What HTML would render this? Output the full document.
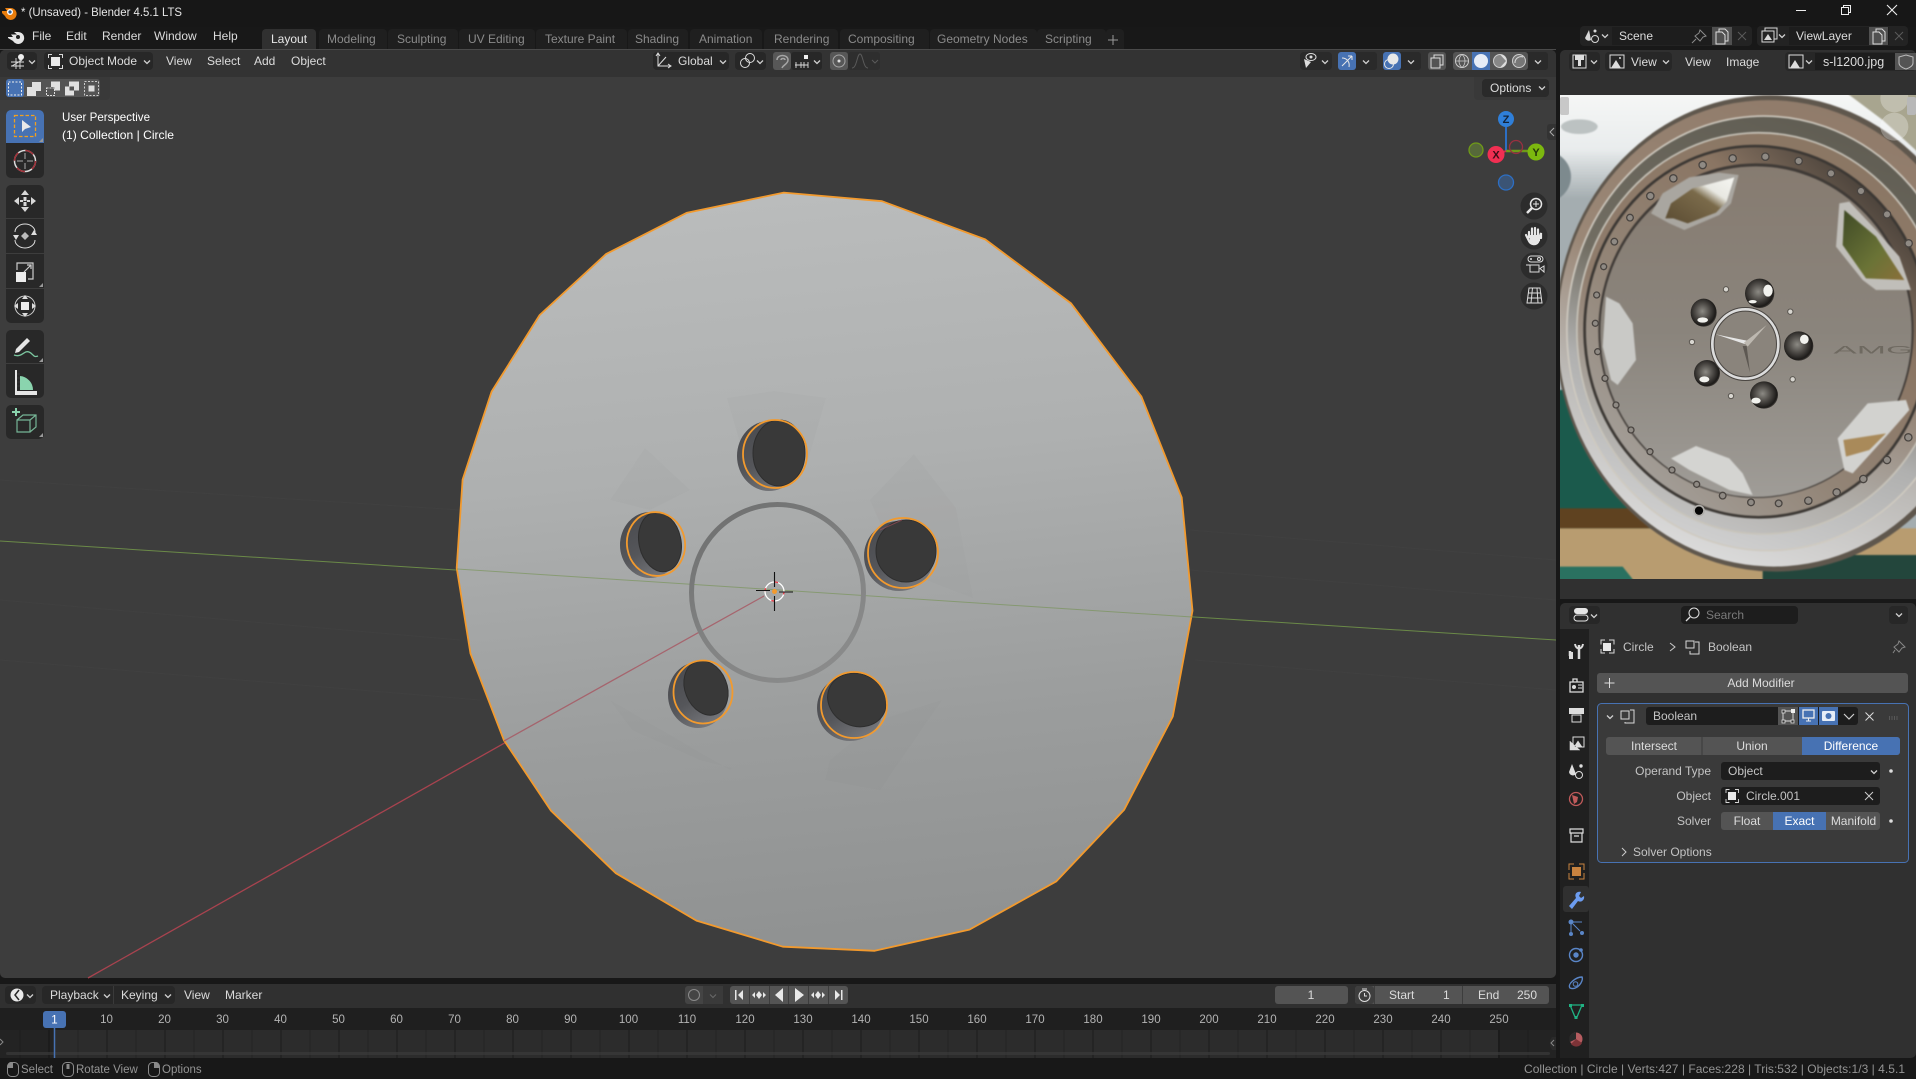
<!DOCTYPE html>
<html lang="en"><head><meta charset="utf-8"><title>Blender</title>
<style>
html,body{margin:0;padding:0;background:#181818;width:1916px;height:1079px;overflow:hidden}
svg{display:block;position:absolute;left:0;top:0}
text{font-family:"Liberation Sans",sans-serif;font-size:12px;fill:#cfcfcf}
.m{fill:#dcdcdc}.tab{fill:#8b8b8b}.d{fill:#c4c4c4}.w{fill:#fff}
.f{font-size:11.5px;fill:#b4b4b4;text-anchor:middle}
.s{font-size:11.5px;fill:#949494}
.r{text-anchor:end}.c{text-anchor:middle}
</style></head><body>
<svg width="1916" height="1079" viewBox="0 0 1916 1079" xmlns="http://www.w3.org/2000/svg">
<defs>
<linearGradient id="disc" x1="0.45" y1="0" x2="0.55" y2="1"><stop offset="0" stop-color="#babcbc"/><stop offset=".35" stop-color="#aeb0b0"/><stop offset=".7" stop-color="#9b9d9d"/><stop offset="1" stop-color="#8f9191"/></linearGradient>
<linearGradient id="lip" x1="0" y1="0" x2="0.6" y2="1"><stop offset="0" stop-color="#47484c"/><stop offset=".6" stop-color="#55565a"/><stop offset="1" stop-color="#75767a"/></linearGradient>
<linearGradient id="ring" x1="0.2" y1="0" x2="0.8" y2="1"><stop offset="0" stop-color="#6f7070"/><stop offset=".55" stop-color="#828383"/><stop offset="1" stop-color="#8b8c8c"/></linearGradient>
<pattern id="tl" width="58" height="28" patternUnits="userSpaceOnUse" patternTransform="translate(106.5 1030)"><rect x="0" y="0" width="1" height="28" fill="#1b1b1b"/><rect x="29" y="0" width="1" height="28" fill="#232323"/></pattern>
<linearGradient id="rim1" x1=".7" y1="0" x2=".3" y2="1"><stop offset="0" stop-color="#8f7a69"/><stop offset=".45" stop-color="#9a8776"/><stop offset=".72" stop-color="#bdbbb8"/><stop offset="1" stop-color="#dedede"/></linearGradient>
<linearGradient id="rim2" x1=".7" y1="0" x2=".3" y2="1"><stop offset="0" stop-color="#5f5c52"/><stop offset=".45" stop-color="#716d62"/><stop offset=".68" stop-color="#b0b0af"/><stop offset="1" stop-color="#d2d2d2"/></linearGradient>
<linearGradient id="rim3" x1=".7" y1="0" x2=".3" y2="1"><stop offset="0" stop-color="#8a7663"/><stop offset=".5" stop-color="#8f7c6c"/><stop offset=".8" stop-color="#aeaba6"/><stop offset="1" stop-color="#c4c4c4"/></linearGradient>
<linearGradient id="rim4" x1=".95" y1=".1" x2=".1" y2=".9"><stop offset="0" stop-color="#34302c"/><stop offset=".3" stop-color="#8a7563"/><stop offset=".65" stop-color="#928476"/><stop offset="1" stop-color="#a5a19c"/></linearGradient>
<linearGradient id="face" x1=".5" y1="0" x2=".5" y2="1"><stop offset="0" stop-color="#867b70"/><stop offset=".5" stop-color="#8a847c"/><stop offset="1" stop-color="#9f9c97"/></linearGradient>
<linearGradient id="sky" x1="0" y1="0" x2="0" y2="1"><stop offset="0" stop-color="#f6f7f6"/><stop offset=".12" stop-color="#e9eced"/><stop offset=".22" stop-color="#a4adb0"/></linearGradient>
<linearGradient id="trees" x1="0" y1="0" x2="1" y2="1"><stop offset="0" stop-color="#3f4a26"/><stop offset=".6" stop-color="#6a7336"/><stop offset="1" stop-color="#8a6f3a"/></linearGradient>
<linearGradient id="w1" x1="0" y1="1" x2="1" y2="0"><stop offset="0" stop-color="#5a4b32"/><stop offset=".55" stop-color="#7a6a4a"/><stop offset=".7" stop-color="#e8e8e2"/><stop offset="1" stop-color="#f6f6f2"/></linearGradient>
<radialGradient id="lug" cx=".45" cy=".45" r=".62"><stop offset="0" stop-color="#8c8a84"/><stop offset=".45" stop-color="#4e4b47"/><stop offset=".82" stop-color="#1c1a18"/><stop offset="1" stop-color="#67625c"/></radialGradient>
<filter id="soft" x="-5%" y="-5%" width="110%" height="110%" color-interpolation-filters="sRGB"><feGaussianBlur stdDeviation="2.4"/></filter>
<clipPath id="imgclip"><rect x="1560" y="95" width="356" height="484"/></clipPath>
<path id="chev" d="M-3-1.5 0 1.5 3-1.5" fill="none" stroke="#d0d0d0" stroke-width="1.3"/>
</defs>

<rect width="1916" height="1079" fill="#181818"/>
<rect width="1916" height="27" fill="#171717"/>
<!-- title bar -->
<g transform="translate(2 5)"><path d="M0 6 5 6 3 3 8 3A6 6 0 1 1 3 11L0 8Z" fill="#e87d0d"/><circle cx="8" cy="7" r="3" fill="#fff"/><circle cx="8" cy="7" r="1.6" fill="#2a5c96"/></g>
<text x="21" y="16" style="fill:#e6e6e6" textLength="161" lengthAdjust="spacingAndGlyphs">* (Unsaved) - Blender 4.5.1 LTS</text>
<path d="M1796 10.500H1806" stroke="#eee" stroke-width="1"/>
<path d="M1841.500 7.500h7v7h-7zM1843.500 7.500v-2h7v7h-2" fill="none" stroke="#eee"/>
<path d="M1887 5 1897 15M1897 5 1887 15" stroke="#eee" stroke-width="1.1"/>

<!-- top bar -->
<g transform="translate(7 29)"><path d="M1 8 6 8 4 5.500 10 5.500 7 3 11 3A6 6 0 1 1 6 12L1 9Z" fill="#e6e6e6"/><circle cx="11" cy="8" r="2" fill="#222"/></g>
<text x="32" y="40" class="m">File</text><text x="66" y="40" class="m">Edit</text><text x="102" y="40" class="m">Render</text><text x="154" y="40" class="m">Window</text><text x="213" y="40" class="m">Help</text>
<path d="M262 49V33a4 4 0 0 1 4-4H312a4 4 0 0 1 4 4V49Z" fill="#303030"/>
<g fill="#1f1f1f"><path d="M319 49V33a4 4 0 0 1 4-4H383a4 4 0 0 1 4 4V49Z"/><path d="M388 49V33a4 4 0 0 1 4-4H454a4 4 0 0 1 4 4V49Z"/><path d="M459 49V33a4 4 0 0 1 4-4H531a4 4 0 0 1 4 4V49Z"/><path d="M536 49V33a4 4 0 0 1 4-4H623a4 4 0 0 1 4 4V49Z"/><path d="M628 49V33a4 4 0 0 1 4-4H684a4 4 0 0 1 4 4V49Z"/><path d="M690 49V33a4 4 0 0 1 4-4H758a4 4 0 0 1 4 4V49Z"/><path d="M764 49V33a4 4 0 0 1 4-4H834a4 4 0 0 1 4 4V49Z"/><path d="M840 49V33a4 4 0 0 1 4-4H925a4 4 0 0 1 4 4V49Z"/><path d="M930 49V33a4 4 0 0 1 4-4H1033a4 4 0 0 1 4 4V49Z"/><path d="M1037 49V33a4 4 0 0 1 4-4H1102a4 4 0 0 1 4 4V49Z"/><path d="M1106 49V33a4 4 0 0 1 4-4H1120a4 4 0 0 1 4 4V49Z"/></g>
<text x="271" y="43" class="m" style="fill:#e6e6e6">Layout</text>
<text x="327" y="43" class="tab">Modeling</text><text x="397" y="43" class="tab">Sculpting</text><text x="468" y="43" class="tab">UV Editing</text><text x="545" y="43" class="tab">Texture Paint</text><text x="635" y="43" class="tab">Shading</text><text x="699" y="43" class="tab">Animation</text><text x="774" y="43" class="tab">Rendering</text><text x="848" y="43" class="tab">Compositing</text><text x="937" y="43" class="tab">Geometry Nodes</text><text x="1045" y="43" class="tab">Scripting</text>
<path d="M1113 35V45M1108 40H1118" stroke="#9a9a9a" stroke-width="1"/>

<!-- scene / viewlayer -->
<rect x="1580" y="26" width="172" height="20" rx="4" fill="#232323"/>
<rect x="1612" y="27" width="120" height="18" fill="#1d1d1d"/>
<rect x="1712" y="27" width="20" height="18" fill="#505050"/>
<path d="M1589 30 1585 38A4 4 0 0 0 1591 40Z" fill="#d8d8d8"/><circle cx="1595" cy="31" r="1.500" fill="#d8d8d8"/><circle cx="1595" cy="39" r="3.500" fill="none" stroke="#d8d8d8"/>
<use href="#chev" x="1605" y="36"/>
<text x="1619" y="40" class="m">Scene</text>
<path d="M1700 30 1706 36 1703 37 1700 41 1695 36 1699 33ZM1696 39 1692 43" fill="none" stroke="#8c8c8c"/>
<path d="M1716 32h6l3 3v9h-9zM1719 32v-3h6l3 3v9h-3" fill="none" stroke="#ddd"/>
<path d="M1738 32 1746 40M1746 32 1738 40" stroke="#5a5a5a"/>
<rect x="1757" y="26" width="151" height="20" rx="4" fill="#232323"/>
<rect x="1789" y="27" width="100" height="18" fill="#1d1d1d"/>
<rect x="1869" y="27" width="19" height="18" fill="#505050"/>
<path d="M1762 31h12v11h-12z M1765 31v-3h12v11h-3" fill="none" stroke="#d8d8d8"/><path d="M1764 40 1768 34 1772 40Z" fill="#d8d8d8"/>
<use href="#chev" x="1782" y="36"/>
<text x="1796" y="40" class="m">ViewLayer</text>
<path d="M1873 32h6l3 3v9h-9zM1876 32v-3h6l3 3v9h-3" fill="none" stroke="#ddd"/>
<path d="M1895 32 1903 40M1903 32 1895 40" stroke="#5a5a5a"/>

<!-- viewport -->
<rect x="0" y="50" width="1556" height="928" rx="5" fill="#3d3d3d"/>
<path d="M0 49.500H1556" stroke="#4a4a4a"/>
<path d="M0 77V55a5 5 0 0 1 5-5H1551a5 5 0 0 1 5 5V77Z" fill="#333"/>
<path d="M0 77H110V96a4 4 0 0 1-4 4H0Z" fill="#393939"/>
<path d="M1474 77H1556V100H1478a4 4 0 0 1-4-4Z" fill="#393939"/>
<!-- grid hints -->
<g stroke="#404040" stroke-width="1" fill="none"><path d="M0 600 460 640M0 660 480 700M1190 570 1556 600M1190 530 1556 560M1195 660 1556 690M0 480 460 510"/></g>
<path d="M0 541 1556 640" stroke="#6b8a48" stroke-width="1"/>
<path d="M88 978 774 591" stroke="#a8434f" stroke-width="1.300"/>

<!-- disc -->
<polygon points="783.8,192.6 882,201.2 985.2,239.4 1071.1,303.4 1141.4,396.6 1181.7,497.4 1192.5,610.7 1172.8,716.5 1124.2,809.7 1056.4,881.3 969.5,929.6 874.7,950.800 782.8,946.7 696.4,920.6 615.8,873.2 551,810.7 503.9,740.2 470.5,653.6 456.7,567.9 462.6,479.7 491.6,391.6 539.7,315 606,254.1 687,212.7" fill="url(#disc)" stroke="#f29a2e" stroke-width="1.800" stroke-linejoin="round"/>
<g fill="#000" opacity=".012"><polygon points="727,398 774,391 826,398 808,460 745,460"/><polygon points="914,454 956,508 973,598 900,570 870,500"/><polygon points="645,448 690,490 650,510 610,500"/><polygon points="632,730 700,760 732,768 730,770 610,700"/><polygon points="825,780 880,790 942,700 880,720 830,760"/></g>
<path d="M457 569 1192 617" stroke="#6f9048" stroke-width="1" opacity=".55"/>
<path d="M504 741 764 596" stroke="#a8505c" stroke-width="1.300" opacity=".75"/>

<!-- ring -->
<ellipse cx="777.500" cy="592.500" rx="86" ry="88" fill="none" stroke="url(#ring)" stroke-width="5"/>

<!-- holes -->
<g>
<ellipse cx="769" cy="456" rx="32" ry="35" fill="url(#lip)"/><ellipse cx="779" cy="453" rx="26" ry="33" fill="#393939" stroke="#2e2e2e"/><ellipse cx="775" cy="454" rx="32" ry="34" fill="none" stroke="#f29a2e" stroke-width="1.800"/>
<ellipse cx="650" cy="545" rx="30" ry="33" fill="url(#lip)"/><ellipse cx="660" cy="542" rx="21" ry="30" transform="rotate(-12 660 542)" fill="#393939" stroke="#2e2e2e"/><ellipse cx="656" cy="544" rx="29" ry="32" transform="rotate(-10 656 544)" fill="none" stroke="#f29a2e" stroke-width="1.800"/>
<ellipse cx="899" cy="556" rx="35" ry="35" fill="url(#lip)"/><ellipse cx="906" cy="551" rx="30" ry="31" fill="#393939" stroke="#2e2e2e"/><ellipse cx="903" cy="553" rx="35" ry="35" fill="none" stroke="#f29a2e" stroke-width="1.800"/>
<ellipse cx="698" cy="695" rx="30" ry="33" fill="url(#lip)"/><ellipse cx="706" cy="688" rx="21" ry="28" transform="rotate(-22 706 688)" fill="#393939" stroke="#2e2e2e"/><ellipse cx="703" cy="692" rx="29.500" ry="31.500" fill="none" stroke="#f29a2e" stroke-width="1.800"/>
<ellipse cx="850" cy="708" rx="33" ry="33" fill="url(#lip)"/><ellipse cx="857" cy="700" rx="30" ry="26" transform="rotate(25 857 700)" fill="#393939" stroke="#2e2e2e"/><ellipse cx="854" cy="705" rx="33" ry="33" fill="none" stroke="#f29a2e" stroke-width="1.800"/>
</g>
<path d="M880 530 902 520" stroke="#a8505c" opacity=".6"/>
<!-- cursor -->
<g><circle cx="774.500" cy="591.500" r="9.500" fill="none" stroke="#fff" stroke-width="1.300"/><circle cx="774.500" cy="591.500" r="9.500" fill="none" stroke="#e8303c" stroke-width="1.300" stroke-dasharray="3 12"/>
<path d="M774.500 572V587M774.500 596V611M756 590.500H770M779 592H793" stroke="#111" stroke-width="1.100"/><circle cx="774.500" cy="591.500" r="2.500" fill="#f29a2e"/></g>

<!-- viewport header widgets -->
<rect x="7" y="52" width="30" height="18" rx="4" fill="#272727"/>
<path d="M12 66 22 60M11 62H24M11 66H24M16 58V69M20 58V69" stroke="#ddd" stroke-width=".9" fill="none"/><circle cx="21" cy="57" r="3" fill="#eee"/>
<use href="#chev" x="32" y="62"/>
<rect x="44" y="52" width="109" height="18" rx="4" fill="#272727"/>
<rect x="51" y="57" width="9" height="9" fill="#e8e8e8"/><path d="M48.500 58V54.500H52M59 54.500H62.500V58M62.500 65V68.500H59M52 68.500H48.500V65" fill="none" stroke="#d8d8d8"/>
<text x="69" y="65" class="m">Object Mode</text><use href="#chev" x="147" y="62"/>
<text x="166" y="65" class="m">View</text><text x="207" y="65" class="m">Select</text><text x="254" y="65" class="m">Add</text><text x="291" y="65" class="m">Object</text>
<!-- center -->
<rect x="653" y="52" width="76" height="18" rx="4" fill="#272727"/>
<path d="M658 54V66H670M658 66 666 57M656 56 658 53 660 56M668 64 671 66 668 68" fill="none" stroke="#ddd"/>
<text x="678" y="65" class="m">Global</text><use href="#chev" x="723" y="62"/>
<rect x="735" y="52" width="31" height="18" rx="4" fill="#272727"/>
<circle cx="745" cy="63" r="4.500" fill="none" stroke="#ddd"/><circle cx="750" cy="58" r="4.500" fill="none" stroke="#ddd"/><use href="#chev" x="760" y="62"/>
<rect x="773" y="52" width="18" height="18" rx="3" fill="#575757"/><rect x="791" y="52" width="31" height="18" rx="3" fill="#272727"/>
<path d="M777 60C777 54 788 54 788 60C788 64 783 65 782 68M781 60C781 58 785 58 785 60" fill="none" stroke="#a5a5a5" stroke-width="1.500"/>
<path d="M795 65H808M796 62V68M801 62V68M804 62V68M808 62V68" stroke="#ddd" fill="none" stroke-width=".9"/><rect x="804" y="55" width="4" height="4" fill="#eee"/><use href="#chev" x="817" y="62"/>
<rect x="830" y="52" width="18" height="18" rx="3" fill="#575757"/><rect x="848" y="52" width="32" height="18" rx="3" fill="#2e2e2e"/>
<circle cx="839" cy="61" r="6" fill="none" stroke="#a5a5a5"/><circle cx="839" cy="61" r="1.500" fill="#ddd"/>
<path d="M852 68C857 68 857 54 860 54S863 68 868 68" fill="none" stroke="#5a5a5a"/><path d="M872 60 875 63 878 60" fill="none" stroke="#5a5a5a"/>
<!-- right -->
<rect x="1300" y="52" width="32" height="18" rx="4" fill="#2a2a2a"/><ellipse cx="1311" cy="57" rx="5" ry="3.500" fill="none" stroke="#ddd"/><circle cx="1311" cy="57" r="1.500" fill="#ddd"/><path d="M1304 59 1311 62 1306 68Z" fill="#ddd"/><use href="#chev" x="1325" y="62"/>
<rect x="1338" y="52" width="39" height="18" rx="3" fill="#2a2a2a"/><rect x="1338" y="52" width="18" height="18" rx="3" fill="#4772b3"/><path d="M1342 66 1352 56M1352 56H1348M1352 56V60M1342 58C1347 58 1350 62 1349 67" fill="none" stroke="#e8e8e8"/><use href="#chev" x="1366" y="62"/>
<rect x="1383" y="52" width="38" height="18" rx="3" fill="#2a2a2a"/><rect x="1383" y="52" width="18" height="18" rx="3" fill="#4772b3"/><circle cx="1393" cy="59" r="5.500" fill="#e8e8e8"/><circle cx="1389" cy="64" r="4.500" fill="none" stroke="#e8e8e8"/><use href="#chev" x="1411" y="62"/>
<rect x="1428" y="52" width="18" height="18" rx="3" fill="#545454"/><path d="M1431 58h9v10h-9zM1434 58v-3h9v10h-3" fill="none" stroke="#ddd"/>
<rect x="1453" y="52" width="95" height="18" rx="3" fill="#2a2a2a"/><rect x="1453" y="52" width="75" height="18" rx="3" fill="#545454"/><rect x="1472" y="52" width="18" height="18" fill="#4772b3"/>
<circle cx="1462" cy="61" r="6.500" fill="none" stroke="#ccc"/><path d="M1455.500 61H1468.500M1462 54.500C1458 58 1458 64 1462 67.500M1462 54.500C1466 58 1466 64 1462 67.500" fill="none" stroke="#ccc" stroke-width=".8"/>
<circle cx="1481" cy="61" r="7" fill="#e6ecf6"/>
<circle cx="1500" cy="61" r="6.500" fill="#888" stroke="#ccc"/><path d="M1500 54.500A6.500 6.500 0 0 1 1500 67.500L1506 61Z" fill="#ddd"/>
<circle cx="1519" cy="61" r="6.500" fill="#777" stroke="#ccc"/><path d="M1515 63A6 6 0 0 1 1523 57" fill="none" stroke="#ddd"/>
<use href="#chev" x="1538" y="62"/>
<!-- tool settings row -->
<rect x="6" y="79" width="94" height="18" rx="3" fill="#545454"/>
<rect x="6" y="79" width="18" height="18" rx="3" fill="#4772b3"/>
<rect x="8.500" y="82" width="13" height="13" fill="none" stroke="#eee" stroke-dasharray="2 1.500"/>
<path d="M27 87h5v-5h9v9h-5v5H27Z" fill="#e0e0e0"/>
<rect x="46.500" y="88" width="8" height="7.500" fill="none" stroke="#ddd" stroke-dasharray="2 1"/><path d="M51 81.500h9v9h-5.500V87H51Z" fill="#e0e0e0"/>
<path d="M69 81.500h10v9h-5v5H65v-9h4Z" fill="#e0e0e0"/><rect x="69.500" y="86.500" width="4.500" height="4" fill="#545454"/>
<rect x="84.500" y="81.500" width="14" height="14" fill="none" stroke="#ccc" stroke-dasharray="2 1.500"/><rect x="88.500" y="85.500" width="6" height="6" fill="#ddd"/>
<rect x="1482" y="79" width="67" height="18" rx="4" fill="#2a2a2a"/><text x="1490" y="92" class="m">Options</text><use href="#chev" x="1542" y="88"/>

<!-- toolbar -->
<rect x="6" y="110" width="38" height="68" rx="5" fill="#282828"/>
<path d="M6 143V115a5 5 0 0 1 5-5H39a5 5 0 0 1 5 5V143Z" fill="#4772b3"/>
<rect x="14.500" y="115.500" width="21" height="21" fill="none" stroke="#f0a020" stroke-dasharray="3.500 2" stroke-width="1.300"/>
<path d="M22 120V132L25 129 31 127Z" fill="#e8e8e8"/><path d="M43 138 39 142H43Z" fill="#999"/>
<circle cx="25" cy="161" r="10.500" fill="none" stroke="#ddd" stroke-width="1.500"/><circle cx="25" cy="161" r="10.500" fill="none" stroke="#a03038" stroke-width="1.500" stroke-dasharray="9 7.500"/><path d="M25 153V159M25 163V169M17 161H23M27 161H33" stroke="#aaa"/>
<rect x="6" y="185" width="38" height="138" rx="5" fill="#282828"/><path d="M6 218.500H44M6 253.500H44M6 288.500H44" stroke="#3d3d3d"/>
<g fill="#d8d8d8"><path d="M25 190 21 195H29ZM25 212 21 207H29ZM14 201 19 197V205ZM36 201 31 197V205Z"/><rect x="23.500" y="197" width="3" height="4"/><rect x="23.500" y="202" width="3" height="4"/><rect x="20" y="200" width="3" height="2"/><rect x="27" y="200" width="3" height="2"/></g>
<path d="M15 232A10 8 0 0 1 35 232M15 240A10 8 0 0 0 35 240" fill="none" stroke="#ddd"/><path d="M25 232 29 236 25 240 21 236Z" fill="#bbb"/><path d="M13 235H19L16 240ZM31 235H37L34 230Z" fill="#ddd"/>
<rect x="16" y="272" width="10" height="10" fill="#ececec"/><path d="M17 270V263H33V279H28M24 272 31 265M27 265H31V269" fill="none" stroke="#ccc" stroke-width="1.200"/><path d="M43 283 39 287H43Z" fill="#999"/>
<circle cx="25" cy="306" r="10" fill="none" stroke="#ccc"/><rect x="21" y="302" width="8" height="8" fill="#ececec"/><path d="M25 295 22 299H28ZM25 317 22 313H28ZM14 306 18 303V309ZM36 306 32 303V309Z" fill="#ddd"/>
<rect x="6" y="330" width="38" height="68" rx="5" fill="#282828"/><path d="M6 363.500H44" stroke="#3d3d3d"/>
<path d="M16 349 27 338 30 341 19 352 15 353Z" fill="#e6e6e6"/><path d="M14 355C22 358 24 350 29 352S33 358 38 356" fill="none" stroke="#7cc7a0" stroke-width="1.300"/><path d="M43 358 39 362H43Z" fill="#999"/>
<path d="M17 370V391H37V395H15V370Z" fill="#e6e6e6"/><path d="M20 390V376A14 14 0 0 1 33 390Z" fill="#8ad4ae"/><path d="M17 374H20M17 378H20M17 382H20M17 386H20" stroke="#333"/>
<rect x="6" y="405" width="38" height="34" rx="5" fill="#282828"/>
<path d="M17 420h13v12H17zM17 420 23 415H36V427L30 432M30 420 36 415" fill="none" stroke="#76b496" stroke-width="1.200"/><path d="M16 408V416M12 412H20" stroke="#8ad4ae" stroke-width="2"/><path d="M43 433 39 437H43Z" fill="#999"/>
<text x="62" y="121" class="w" textLength="88" lengthAdjust="spacingAndGlyphs">User Perspective</text>
<text x="62" y="139" class="w" textLength="112" lengthAdjust="spacingAndGlyphs">(1) Collection | Circle</text>

<!-- gizmo -->
<path d="M1506 151V127" stroke="#2d6fc4" stroke-width="2"/><path d="M1506 151H1530" stroke="#6f9a18" stroke-width="2.500"/><path d="M1506 151 1498 154" stroke="#d0304c" stroke-width="2"/>
<circle cx="1476" cy="150" r="7" fill="#56693a" stroke="#6f9a18" stroke-width="1.300"/>
<circle cx="1516" cy="147" r="6.500" fill="none" stroke="#9a3040" stroke-width="1.300"/>
<circle cx="1506" cy="182.500" r="7.500" fill="#3b5475" stroke="#2d6fc4" stroke-width="1.300"/>
<circle cx="1506" cy="119" r="8" fill="#2f7fd9"/><text x="1506" y="123" class="c" style="fill:#12233a;font-weight:bold;font-size:11px">Z</text>
<circle cx="1496" cy="154.500" r="8.500" fill="#f12f52"/><text x="1496" y="158.500" class="c" style="fill:#3a0c16;font-weight:bold;font-size:11px">X</text>
<circle cx="1536" cy="152" r="8.500" fill="#7cb80f"/><text x="1536" y="156" class="c" style="fill:#24360a;font-weight:bold;font-size:11px">Y</text>
<path d="M1556 124H1550a3 3 0 0 0-3 3V137a3 3 0 0 0 3 3H1556Z" fill="#333"/><path d="M1554 128 1550 132 1554 136" fill="none" stroke="#aaa"/>
<g fill="#2c2c2c"><circle cx="1534" cy="206" r="13.500"/><circle cx="1534" cy="236" r="13.500"/><circle cx="1534" cy="266" r="13.500"/><circle cx="1534" cy="296" r="13.500"/></g>
<circle cx="1536" cy="204" r="5.500" fill="none" stroke="#e6e6e6" stroke-width="1.500"/><path d="M1536 201V207M1533 204H1539" stroke="#e6e6e6"/><path d="M1532 208 1527 213" stroke="#e6e6e6" stroke-width="2.500"/>
<path d="M1529 237V232M1532 236V228.500M1535 236V228M1538 236V229.500M1541 238V233L1538 242C1536 245 1531 245 1529 241L1526 235" fill="none" stroke="#e6e6e6" stroke-width="2.200" stroke-linecap="round"/><path d="M1529 235H1540V241L1535 244 1530 242Z" fill="#e6e6e6"/>
<path d="M1531 262a3 3 0 1 1 0-6h9a3 3 0 0 1 0 6z" fill="none" stroke="#ddd"/><circle cx="1531" cy="259" r="1" fill="#ddd"/><circle cx="1539" cy="259" r="1.500" fill="none" stroke="#ddd"/><rect x="1530" y="265" width="9" height="7" fill="none" stroke="#ddd"/><path d="M1540 268.500 1544 266V272Z" fill="none" stroke="#ddd"/><path d="M1526 265H1530" stroke="#ddd"/>
<path d="M1529 288H1540L1542 303H1527ZM1528 293H1541M1527.500 298H1541.500M1532.500 288 1531 303M1537 288 1538 303" fill="none" stroke="#ddd"/>

<!-- timeline -->
<path d="M0 984H1556V1058H0Z" fill="#303030"/>
<rect x="0" y="1008" width="1556" height="22" fill="#1f1f1f"/>
<rect x="0" y="1030" width="1556" height="28" fill="#2c2c2c"/>
<rect x="0" y="1030" width="1556" height="28" fill="url(#tl)"/>
<rect x="0" y="1030" width="54" height="28" fill="#000" opacity=".2"/><rect x="1498" y="1030" width="58" height="28" fill="#000" opacity=".2"/>
<rect x="6" y="1052" width="1544" height="3" rx="1.500" fill="#3a3a3a" opacity=".7"/>
<rect x="5" y="986" width="31" height="18" rx="4" fill="#272727"/><circle cx="17" cy="995" r="6.500" fill="#e8e8e8"/><path d="M19 990 15 995 19 1000" fill="none" stroke="#272727" stroke-width="1.500"/><use href="#chev" x="30" y="996"/>
<rect x="42" y="986" width="133" height="18" rx="4" fill="#272727"/><path d="M113.500 986V1004" stroke="#3a3a3a"/>
<text x="50" y="999" class="m">Playback</text><use href="#chev" x="107" y="996"/><text x="121" y="999" class="m">Keying</text><use href="#chev" x="168" y="996"/>
<text x="184" y="999" class="m">View</text><text x="225" y="999" class="m">Marker</text>
<rect x="685" y="986" width="38" height="18" rx="3" fill="#444"/><rect x="703" y="986" width="20" height="18" fill="#3a3a3a"/><circle cx="694" cy="995" r="5.500" fill="none" stroke="#8a8a8a"/><path d="M710 994.500 713 997.500 716 994.500" fill="none" stroke="#6a6a6a"/>
<rect x="730" y="986" width="118" height="18" rx="3" fill="#545454"/>
<path d="M749.500 986V1004M769.500 986V1004M788.500 986V1004M808.500 986V1004M828.500 986V1004" stroke="#3d3d3d"/>
<g fill="#e8e8e8"><rect x="735" y="990" width="1.500" height="10"/><path d="M743 990 738 995 743 1000Z"/>
<path d="M756 995 759 991 762 995 759 999ZM755 992 752 995 755 998ZM763 992 766 995 763 998Z"/>
<path d="M783 988 775 995 783 1002Z"/><path d="M795 988 804 995 795 1002Z"/>
<path d="M815 995 818 991 821 995 818 999ZM814 992 811 995 814 998ZM822 992 825 995 822 998Z"/>
<path d="M835 990 840 995 835 1000Z"/><rect x="841" y="990" width="1.500" height="10"/></g>
<rect x="1275" y="986" width="73" height="18" rx="3" fill="#545454"/><text x="1311" y="999" class="c m">1</text>
<rect x="1355" y="986" width="194" height="18" rx="3" fill="#545454"/><rect x="1355" y="986" width="19" height="18" rx="3" fill="#3e3e3e"/><path d="M1462.500 986V1004M1374.500 986V1004" stroke="#3d3d3d"/>
<circle cx="1364.500" cy="996" r="5.500" fill="none" stroke="#ddd"/><path d="M1362 989H1367M1364.500 993V996H1367" fill="none" stroke="#ddd"/>
<text x="1389" y="999" class="m">Start</text><text x="1443" y="999" class="m">1</text><text x="1478" y="999" class="m">End</text><text x="1527" y="999" class="c m">250</text>
<text x="106.500" y="1023" class="f">10</text><text x="164.500" y="1023" class="f">20</text><text x="222.500" y="1023" class="f">30</text><text x="280.500" y="1023" class="f">40</text><text x="338.500" y="1023" class="f">50</text><text x="396.500" y="1023" class="f">60</text><text x="454.500" y="1023" class="f">70</text><text x="512.500" y="1023" class="f">80</text><text x="570.500" y="1023" class="f">90</text><text x="628.500" y="1023" class="f">100</text><text x="687" y="1023" class="f">110</text><text x="745" y="1023" class="f">120</text><text x="803" y="1023" class="f">130</text><text x="861" y="1023" class="f">140</text><text x="919" y="1023" class="f">150</text><text x="977" y="1023" class="f">160</text><text x="1035" y="1023" class="f">170</text><text x="1093" y="1023" class="f">180</text><text x="1151" y="1023" class="f">190</text><text x="1209" y="1023" class="f">200</text><text x="1267" y="1023" class="f">210</text><text x="1325" y="1023" class="f">220</text><text x="1383" y="1023" class="f">230</text><text x="1441" y="1023" class="f">240</text><text x="1499" y="1023" class="f">250</text>
<path d="M54.500 1028V1058" stroke="#4772b3" stroke-width="1.500"/>
<rect x="43" y="1011" width="23" height="17" rx="3" fill="#4772b3"/><text x="54.500" y="1023.500" class="f" style="fill:#fff">1</text>
<path d="M1556 1037H1552L1550 1040V1046L1552 1050H1556Z" fill="#2a2a2a"/><path d="M1554 1040 1551 1043 1554 1046" fill="none" stroke="#888"/>
<path d="M0 1039 3 1042 0 1045" fill="none" stroke="#888"/>

<!-- image editor -->
<rect x="1560" y="50" width="356" height="549" rx="5" fill="#303030"/>
<rect x="1569" y="52" width="31" height="19" rx="4" fill="#272727"/><rect x="1573" y="55" width="13" height="13" fill="none" stroke="#ddd"/><path d="M1575 55H1584V60H1581V66H1578V60H1575Z" fill="#ddd"/><use href="#chev" x="1594" y="62"/>
<rect x="1605" y="52" width="67" height="19" rx="4" fill="#272727"/><rect x="1610" y="55" width="14" height="13" fill="none" stroke="#ddd"/><path d="M1611 68 1616 60 1621 68Z" fill="#ddd"/><circle cx="1620" cy="58" r="1" fill="#ddd"/><text x="1631" y="66" class="m">View</text><use href="#chev" x="1666" y="62"/>
<text x="1685" y="66" class="m">View</text><text x="1726" y="66" class="m">Image</text>
<rect x="1785" y="52" width="131" height="19" rx="4" fill="#272727"/><rect x="1815" y="53" width="80" height="17" fill="#1d1d1d"/><rect x="1895" y="53" width="21" height="17" fill="#545454"/>
<rect x="1789" y="55" width="14" height="13" fill="none" stroke="#ddd"/><path d="M1790 68 1795 60 1800 68Z" fill="#ddd"/><use href="#chev" x="1809" y="62"/>
<text x="1823" y="66" class="m" style="font-size:12.500px">s-l1200.jpg</text>
<path d="M1906 55 1913 57V63C1913 66 1909 68 1906 69 1903 68 1899 66 1899 63V57Z" fill="none" stroke="#bbb"/>

<!-- photo -->
<g clip-path="url(#imgclip)">
<rect x="1560" y="95" width="356" height="484" fill="#8a8a80"/>
<g transform="translate(1556 90) scale(.33333)">
<g filter="url(#soft)">
<rect x="0" y="0" width="1090" height="1480" fill="url(#sky)"/>
<rect x="0" y="900" width="320" height="430" fill="#1b5a4c"/>
<rect x="0" y="1255" width="280" height="60" fill="#5f4220"/>
<rect x="0" y="1315" width="1090" height="165" fill="#b89c70"/>
<rect x="620" y="1395" width="470" height="85" fill="#23463c"/>
<path d="M0 1430H200L240 1480H0Z" fill="#2a7160"/>
<ellipse cx="70" cy="110" rx="55" ry="22" fill="#bcc2c2"/>
<path d="M0 190C60 220 60 300 0 330Z" fill="#7d8a8e"/>
<path d="M860 0H1090V190L980 90Z" fill="#a8a58f"/>
<ellipse cx="650" cy="730" rx="652" ry="715" fill="#5f574d" transform="rotate(-4 650 730)"/>
<ellipse cx="645" cy="730" rx="640" ry="700" fill="url(#rim1)" transform="rotate(-4 645 730)"/>
<ellipse cx="630" cy="730" rx="597" ry="652" fill="url(#rim2)" stroke="#cfcac0" stroke-width="5" transform="rotate(-4 630 730)"/>
<ellipse cx="615" cy="730" rx="552" ry="602" fill="url(#rim3)" stroke="#c8c4ba" stroke-width="5" transform="rotate(-4 615 730)"/>
<ellipse cx="603" cy="725" rx="517" ry="557" fill="url(#rim4)" stroke="#3b3733" stroke-width="8" transform="rotate(-4 603 725)"/>
<ellipse cx="600" cy="722" rx="473" ry="502" fill="#3f3a36"/>
<ellipse cx="600" cy="725" rx="467" ry="496" fill="url(#face)"/>
<!-- windows -->
<path d="M285 370 320 310 400 262 490 248 548 255 525 340 490 375 385 420 340 400Z" fill="#a9a6a0"/>
<path d="M328 385 345 340 410 295 535 262 512 335 480 368 395 400 352 385Z" fill="url(#w1)"/>
<path d="M850 340 880 335 960 420 1030 500 1065 600 960 600 920 570 840 470Z" fill="#c0beb9"/>
<path d="M865 360 960 440 1045 570 930 565 860 465Z" fill="url(#trees)"/>
<path d="M150 620 190 640 230 700 240 810 185 885 165 870 140 770Z" fill="#c9c9c6"/>
<path d="M345 1105 420 1068 520 1105 560 1150 590 1215 520 1200 400 1140Z" fill="#d4d4d1"/>
<path d="M935 940 1050 930 1060 960 990 1040 890 1150 865 1140 845 1045Z" fill="#d2d2cf"/>
<path d="M862 1050 990 1030 940 1080 870 1100Z" fill="#a98a5a"/>
</g>
<!-- lugs -->
<ellipse cx="611" cy="610" rx="44" ry="44" fill="url(#lug)"/><ellipse cx="443" cy="668" rx="39" ry="42" fill="url(#lug)"/><ellipse cx="728" cy="768" rx="44" ry="44" fill="url(#lug)"/><ellipse cx="453" cy="850" rx="39" ry="40" fill="url(#lug)"/><ellipse cx="624" cy="915" rx="42" ry="41" fill="url(#lug)"/>
<g fill="#f2f2ee"><ellipse cx="636" cy="602" rx="14" ry="18"/><ellipse cx="745" cy="748" rx="13" ry="14"/><ellipse cx="600" cy="932" rx="14" ry="9"/><ellipse cx="440" cy="690" rx="16" ry="8"/><ellipse cx="445" cy="868" rx="15" ry="9"/><ellipse cx="590" cy="635" rx="12" ry="5"/></g>
<g fill="#d8d6d0" stroke="#5a5650" stroke-width="3"><circle cx="510" cy="598" r="8"/><circle cx="703" cy="665" r="8"/><circle cx="408" cy="756" r="8"/><circle cx="710" cy="868" r="8"/><circle cx="525" cy="918" r="8"/></g>
<!-- star -->
<ellipse cx="568" cy="762" rx="99" ry="104" fill="#8a847c" stroke="#4a4642" stroke-width="14"/>
<ellipse cx="568" cy="762" rx="99" ry="104" fill="none" stroke="#dcdcdc" stroke-width="8"/>
<path d="M480 733 566 762 572 752Z" fill="#e6e6e6"/><path d="M632 705 564 758 575 770Z" fill="#bdb8b0"/><path d="M582 848 560 768 572 768Z" fill="#5d5852"/>
<text x="832" y="790" style="font-size:34px;fill:#6e6960" textLength="240" lengthAdjust="spacingAndGlyphs">AMG</text>
<!-- bolts -->
<g fill="#8f8a84" stroke="#4a4541" stroke-width="4"><circle cx="530" cy="205" r="11"/><circle cx="628" cy="200" r="11"/><circle cx="728" cy="213" r="11"/><circle cx="825" cy="250" r="11"/><circle cx="915" cy="303" r="11"/><circle cx="993" cy="373" r="11"/><circle cx="1058" cy="460" r="11"/><circle cx="440" cy="225" r="11"/><circle cx="352" cy="265" r="11"/><circle cx="283" cy="318" r="11"/><circle cx="222" cy="383" r="10"/><circle cx="175" cy="455" r="10"/><circle cx="143" cy="530" r="9"/><circle cx="122" cy="615" r="9"/><circle cx="118" cy="700" r="9"/><circle cx="125" cy="785" r="9"/><circle cx="147" cy="865" r="9"/><circle cx="180" cy="945" r="9"/><circle cx="225" cy="1020" r="9"/><circle cx="282" cy="1085" r="9"/><circle cx="348" cy="1140" r="9"/><circle cx="422" cy="1183" r="9"/><circle cx="500" cy="1217" r="10"/><circle cx="585" cy="1237" r="10"/><circle cx="668" cy="1240" r="10"/><circle cx="757" cy="1232" r="11"/><circle cx="842" cy="1207" r="11"/><circle cx="922" cy="1167" r="11"/><circle cx="993" cy="1110" r="11"/><circle cx="1057" cy="1042" r="11"/></g>
<circle cx="429" cy="1262" r="15" fill="#050505" stroke="#b0aeaa" stroke-width="5"/>
<circle cx="1015" cy="25" r="42" fill="#fff" opacity=".28"/><circle cx="1015" cy="110" r="42" fill="#fff" opacity=".28"/>
</g></g>
<rect x="1560" y="97" width="9" height="18" rx="2" fill="#c8c8c8"/><rect x="1907" y="97" width="9" height="18" rx="2" fill="#b8b8b8"/>
<rect x="1560" y="579" width="356" height="20" fill="#303030"/>

<!-- properties -->
<rect x="1560" y="603" width="356" height="455" rx="5" fill="#303030"/>
<rect x="1560" y="629" width="29" height="429" fill="#202020"/>
<rect x="1563" y="886" width="26" height="26" rx="3" fill="#303030"/>
<rect x="1569" y="606" width="31" height="18" rx="4" fill="#272727"/><rect x="1574" y="608" width="14" height="6" rx="3" fill="#e6e6e6"/><rect x="1574" y="615" width="14" height="6" rx="3" fill="none" stroke="#e6e6e6"/><use href="#chev" x="1594" y="616"/>
<rect x="1681" y="606" width="117" height="18" rx="4" fill="#1d1d1d"/><circle cx="1694" cy="613" r="5" fill="none" stroke="#ddd"/><path d="M1690 617 1686 621" stroke="#ddd" stroke-width="1.300"/><text x="1706" y="619" style="fill:#7a7a7a">Search</text>
<rect x="1889" y="606" width="19" height="18" rx="4" fill="#272727"/><use href="#chev" x="1899" y="615"/>
<!-- tab icons -->
<g><path d="M1570 656V651M1579 645V659" stroke="#ddd" stroke-width="2.500"/><path d="M1575 644C1576 650 1582 650 1583 644" fill="none" stroke="#ddd" stroke-width="2"/><rect x="1569" y="652" width="4" height="7" fill="#ddd"/></g>
<path d="M1570 682H1583V692H1570ZM1573 682V679H1577V682" fill="none" stroke="#ddd" stroke-width="1.300"/><path d="M1578 685H1582M1578 688H1582" stroke="#ddd"/><circle cx="1574" cy="687" r="2" fill="#ddd"/>
<path d="M1569 708H1584V714H1569Z" fill="#ddd"/><rect x="1572" y="715" width="9" height="7" fill="none" stroke="#ddd"/>
<rect x="1573" y="737" width="11" height="10" fill="none" stroke="#ddd"/><path d="M1570 741V750H1580M1574 747 1578 741 1582 747Z" fill="#ddd" stroke="#ddd" stroke-width=".6"/>
<path d="M1572 764 1569 772A4 4 0 0 0 1576 774Z" fill="#ddd"/><circle cx="1581" cy="766" r="1.700" fill="#ddd"/><circle cx="1579" cy="775" r="3.500" fill="none" stroke="#ddd"/>
<circle cx="1576" cy="799" r="6.500" fill="none" stroke="#c05a5a" stroke-width="1.300"/><path d="M1572 795 1578 797 1577 802 1574 804Z" fill="#c05a5a"/>
<path d="M1570 829H1583V833H1570ZM1571 833V842H1582V833M1574 836H1579" fill="none" stroke="#ddd" stroke-width="1.200"/>
<rect x="1572" y="867" width="9" height="9" fill="#c9833f"/><path d="M1569 870V864H1574M1579 864H1584V870M1584 873V879H1579M1574 879H1569V873" fill="none" stroke="#c9833f"/>
<path d="M1569 906 1576 898C1574 894 1577 891 1581 892L1579 896 1581 898 1584 896C1585 900 1581 903 1578 901L1572 909Z" fill="#6c9cf0"/>
<circle cx="1571" cy="922" r="2.500" fill="#5a86c8"/><circle cx="1582" cy="933" r="2" fill="#5a86c8"/><circle cx="1571" cy="934" r="2" fill="#5a86c8"/><path d="M1573 922H1582M1571 924V932M1573 924 1580 931" stroke="#5a86c8" fill="none"/>
<circle cx="1576" cy="955" r="6.500" fill="none" stroke="#5a86c8" stroke-width="1.400"/><circle cx="1576" cy="955" r="2.700" fill="#5a86c8"/><circle cx="1581" cy="950" r="1.800" fill="#5a86c8"/>
<path d="M1570 988C1567 984 1576 977 1582 977 1584 981 1577 991 1570 988Z" fill="none" stroke="#5a86c8" stroke-width="1.400"/><circle cx="1575.500" cy="984" r="2.300" fill="none" stroke="#5a86c8"/>
<path d="M1570 1005H1582L1577 1017H1575Z" fill="none" stroke="#20b283" stroke-width="1.300"/><g fill="#20b283"><rect x="1569" y="1004" width="3" height="3"/><rect x="1581" y="1004" width="3" height="3"/><rect x="1574.500" y="1016" width="3" height="3"/></g>
<circle cx="1576" cy="1039" r="6.500" fill="#b65c60"/><path d="M1576 1039V1032.500A6.500 6.500 0 0 0 1570 1042Z" fill="#2a2a2a"/><path d="M1576 1039 1582 1043 A6.500 6.500 0 0 1 1571 1044Z" fill="#7d3337"/>
<!-- breadcrumb -->
<rect x="1603" y="643" width="8" height="8" fill="#e8e8e8"/><path d="M1601 644.500V640H1605M1609 640H1614V644.500M1614 649V653H1609M1605 653H1601V649" fill="none" stroke="#d8d8d8"/>
<text x="1623" y="651" class="d">Circle</text>
<path d="M1670 643 1675 647 1670 651" fill="none" stroke="#ccc"/>
<path d="M1686 641H1694V648H1686ZM1690 651V654H1699V642H1695" fill="none" stroke="#d8d8d8"/>
<text x="1708" y="651" class="d">Boolean</text>
<path d="M1899 641 1905 647 1902 648 1899 652 1894 647 1898 644ZM1895 650 1893 653" fill="none" stroke="#888"/>
<rect x="1597" y="673" width="311" height="20" rx="3" fill="#545454"/><path d="M1609.500 678V688M1604.500 683H1614.500" stroke="#ddd"/><text x="1761" y="687" class="c m">Add Modifier</text>
<!-- modifier panel -->
<rect x="1597.500" y="703.500" width="311" height="159" rx="4" fill="#3a3a3a" stroke="#4772b3"/>
<use href="#chev" x="1610" y="717"/>
<path d="M1621 711H1629V719H1621ZM1625 722V723H1634V710H1630" fill="none" stroke="#d8d8d8"/>
<rect x="1646" y="707" width="212" height="18" rx="3" fill="#1d1d1d"/>
<text x="1653" y="720" class="d">Boolean</text>
<rect x="1778" y="707" width="20" height="18" fill="#545454"/><path d="M1783 711H1793V721H1783Z" fill="none" stroke="#ddd" stroke-width=".9"/><g fill="#333" stroke="#ddd" stroke-width=".8"><rect x="1782" y="710" width="3" height="3"/><rect x="1782" y="720" width="3" height="3"/><rect x="1791" y="720" width="3" height="3"/></g><rect x="1791" y="709" width="4" height="4" fill="#eee"/>
<rect x="1799" y="707" width="19" height="18" fill="#4772b3"/><rect x="1803" y="710" width="11" height="8" fill="none" stroke="#eee" stroke-width="1.300"/><path d="M1806 721H1811M1808.500 718V721" stroke="#eee"/>
<rect x="1819" y="707" width="19" height="18" fill="#4772b3"/><rect x="1822" y="711" width="13" height="10" rx="1" fill="#e6edf7"/><circle cx="1828.500" cy="716" r="3" fill="#4772b3"/>
<path d="M1844 714 1849 719 1854 714" fill="none" stroke="#d0d0d0" stroke-width="1.200"/>
<path d="M1865.500 712.500 1873.500 720.500M1873.500 712.500 1865.500 720.500" stroke="#ddd"/>
<path d="M1889 717H1899M1889 719H1899" stroke="#777" stroke-dasharray="1 1.500"/>
<rect x="1606" y="737" width="294" height="18" rx="3" fill="#545454"/><path d="M1702 737V755" stroke="#3a3a3a"/>
<path d="M1802 737H1897a3 3 0 0 1 3 3V752a3 3 0 0 1-3 3H1802Z" fill="#4772b3"/>
<text x="1654" y="750" class="c m">Intersect</text><text x="1752" y="750" class="c m">Union</text><text x="1851" y="750" class="c w">Difference</text>
<text x="1711" y="775" class="r d">Operand Type</text>
<rect x="1721" y="762" width="159" height="18" rx="3" fill="#1d1d1d"/><text x="1728" y="775" class="d">Object</text><use href="#chev" x="1874" y="772"/><circle cx="1891" cy="771" r="1.800" fill="#ddd"/>
<text x="1711" y="800" class="r d">Object</text>
<rect x="1721" y="787" width="159" height="18" rx="3" fill="#1d1d1d"/><rect x="1728" y="792" width="8" height="8" fill="#e8e8e8"/><path d="M1726 793V789.500H1729.500M1735 789.500H1738.500V793M1738.500 799V802.500H1735M1729.500 802.500H1726V799" fill="none" stroke="#d8d8d8" stroke-width=".9"/><text x="1746" y="800" class="d">Circle.001</text>
<path d="M1865 792 1873 800M1873 792 1865 800" stroke="#ccc"/>
<text x="1711" y="825" class="r d">Solver</text>
<rect x="1721" y="812" width="159" height="18" rx="3" fill="#545454"/><rect x="1773" y="812" width="53" height="18" fill="#4772b3"/>
<text x="1747" y="825" class="c m">Float</text><text x="1799.500" y="825" class="c w">Exact</text><text x="1853.500" y="825" class="c m">Manifold</text>
<circle cx="1891" cy="821" r="1.800" fill="#ddd"/>
<path d="M1622 848 1626 852 1622 856" fill="none" stroke="#ccc"/>
<text x="1633" y="856" class="d">Solver Options</text>

<!-- status bar -->
<rect x="0" y="1058" width="1916" height="21" fill="#181818"/>
<g fill="none" stroke="#8a8a8a"><rect x="7.500" y="1062.500" width="11" height="14" rx="4"/><rect x="62.500" y="1062.500" width="11" height="14" rx="4"/><rect x="148.500" y="1062.500" width="11" height="14" rx="4"/></g>
<path d="M8 1068V1065a3 3 0 0 1 3-3h2v6Z" fill="#8a8a8a"/><rect x="66.500" y="1064" width="3" height="5" fill="#8a8a8a"/><path d="M154 1062h2a3 3 0 0 1 3 3v3h-5Z" fill="#8a8a8a"/>
<text x="21" y="1073" class="s">Select</text><text x="76" y="1073" class="s">Rotate View</text><text x="162" y="1073" class="s">Options</text>
<text x="1524" y="1073" class="s" style="font-size:12px" textLength="381">Collection | Circle | Verts:427 | Faces:228 | Tris:532 | Objects:1/3 | 4.5.1</text>
</svg>
</body></html>
